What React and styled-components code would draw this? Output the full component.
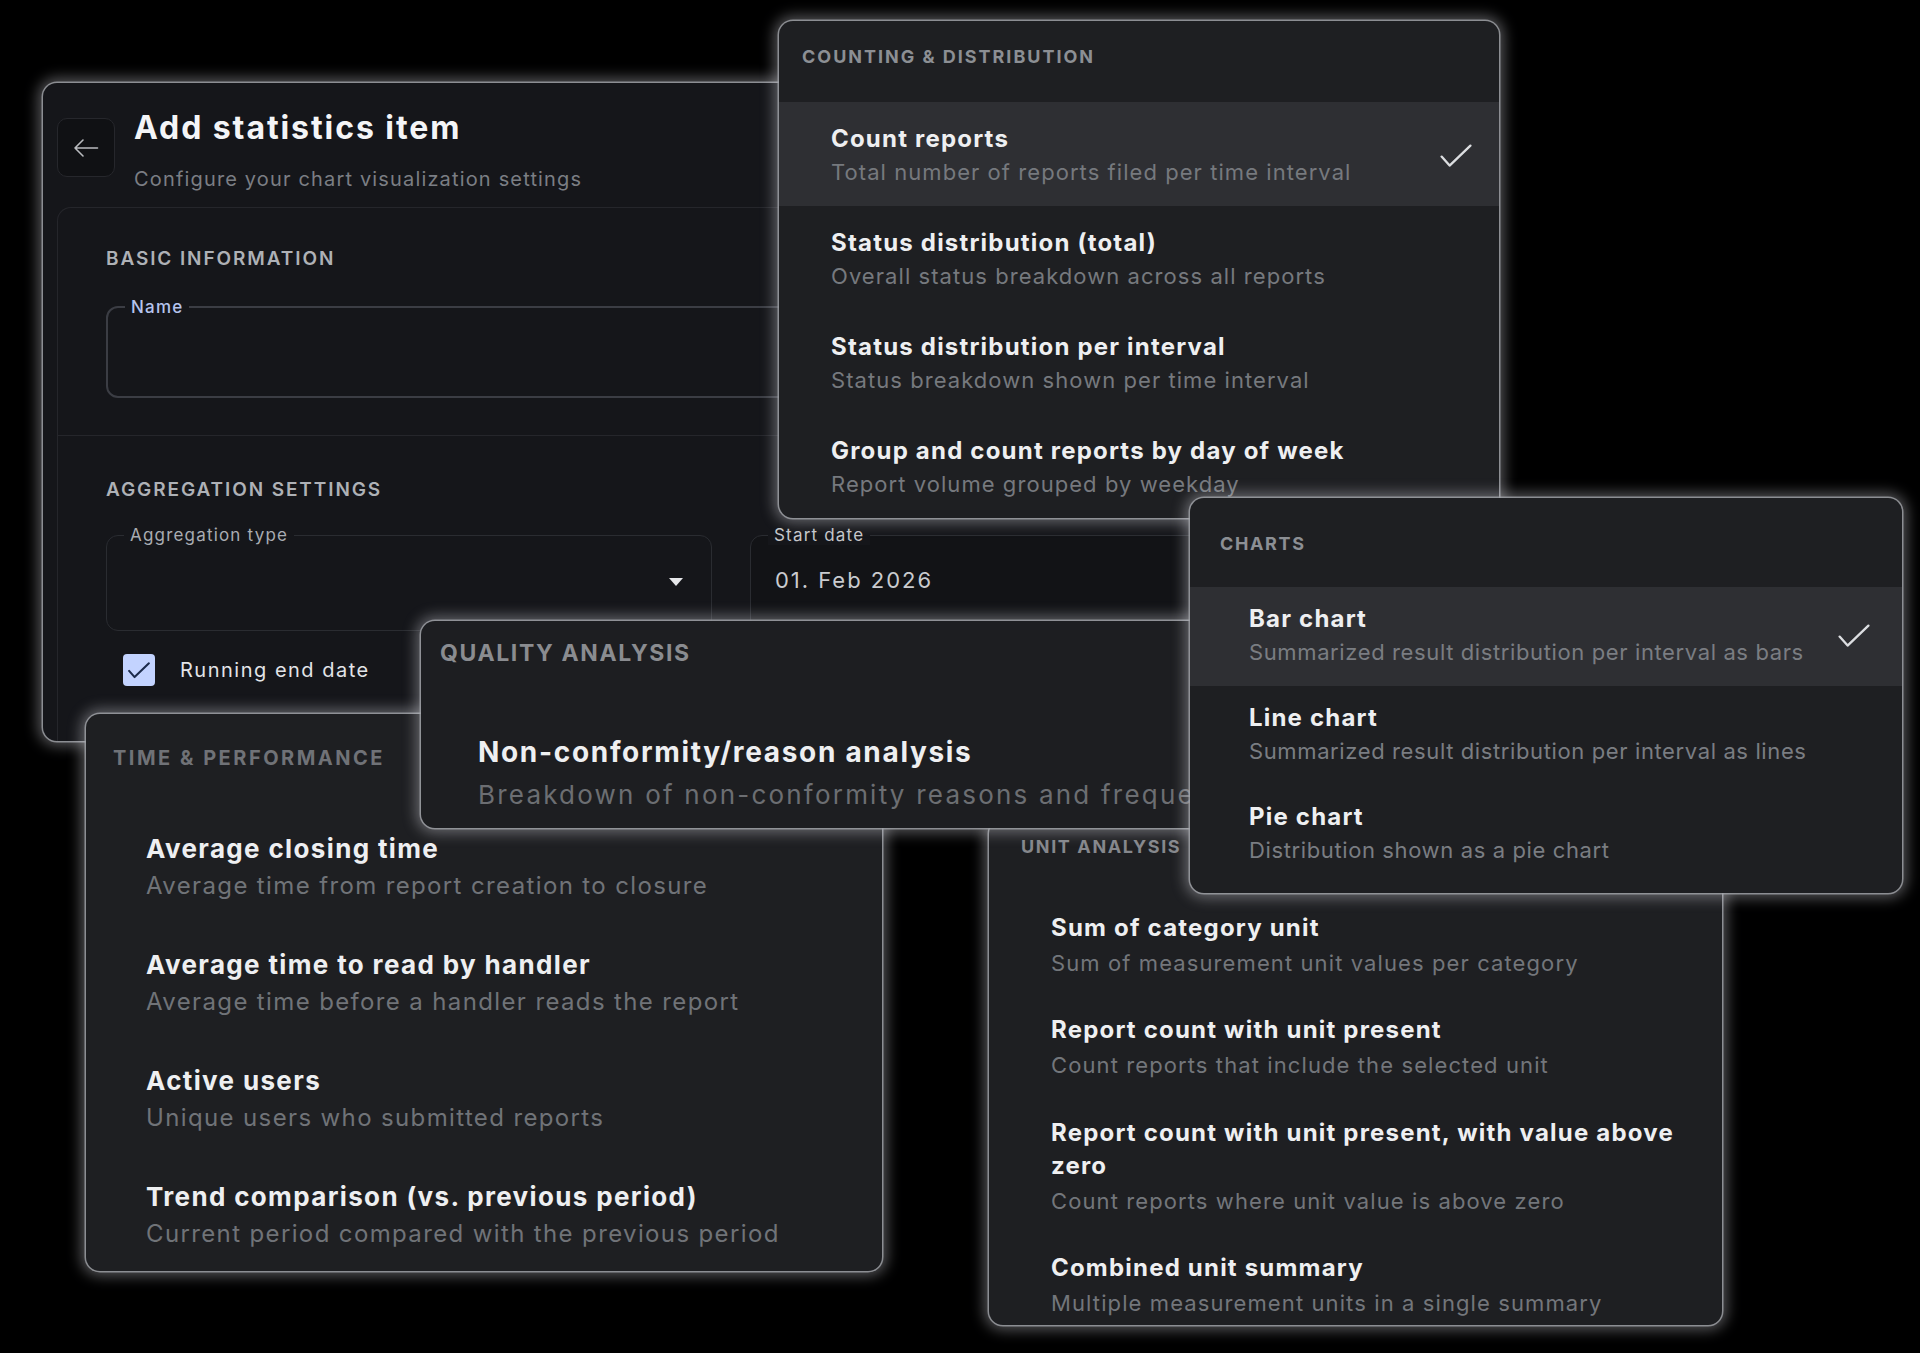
import React from "react";
import styled, { createGlobalStyle } from "styled-components";

const GlobalStyle = createGlobalStyle`
  html, body {
    margin: 0;
    padding: 0;
    background: #000000;
  }
  body {
    font-family: "Inter", "Noto Sans", sans-serif;
    -webkit-font-smoothing: antialiased;
  }
  * {
    box-sizing: border-box;
  }
`;

const Canvas = styled.div`
  position: relative;
  width: 1920px;
  height: 1353px;
  overflow: hidden;
  background: #000000;
`;

/* floating windows on a black canvas: their placement is the content */
const Window = styled.section`
  position: absolute;
  left: ${(p) => p.$x}px;
  top: ${(p) => p.$y}px;
  width: ${(p) => p.$w}px;
  height: ${(p) => p.$h}px;
  z-index: ${(p) => p.$z};
  display: flex;
  flex-direction: column;
  background: ${(p) => p.$bg || "#1e1f22"};
  border-radius: 14px;
  overflow: hidden;
  box-shadow: 0 0 0 1.5px rgba(160, 162, 168, 0.8),
    0 0 14px 5px rgba(220, 222, 228, 0.38);
`;

/* ---------- form window ---------- */

const FormHeader = styled.header`
  display: flex;
  align-items: flex-start;
  gap: 19px;
  padding: 26px 14px 0;
`;

const BackButton = styled.button`
  width: 58px;
  height: 59px;
  margin-top: 9px;
  display: flex;
  align-items: center;
  justify-content: center;
  background: #101114;
  border: 1px solid #26272c;
  border-radius: 10px;
  color: #b9bbbf;
  padding: 0;
`;

const TitleBlock = styled.div`
  display: flex;
  flex-direction: column;
`;

const PageTitle = styled.h1`
  margin: 0;
  font-size: 32px;
  line-height: 38px;
  font-weight: 700;
  letter-spacing: 0.06em;
  color: #f4f5f7;
`;

const PageSubtitle = styled.p`
  margin: 19px 0 0;
  font-size: 20px;
  line-height: 26px;
  letter-spacing: 0.058em;
  color: #7b7e84;
`;

const FormCard = styled.div`
  flex: 1;
  margin: 15px 14px 0;
  border: 1px solid #25262b;
  border-bottom: none;
  border-radius: 14px 14px 0 0;
`;

const FormSection = styled.div`
  padding: ${(p) => (p.$first ? "39px 48px 37px" : "42px 48px 0")};
  border-bottom: ${(p) => (p.$first ? "1px solid #25262b" : "none")};
`;

const SectionLabel = styled.h2`
  margin: 0 0 ${(p) => p.$gap}px;
  font-size: 19px;
  line-height: 24px;
  font-weight: 600;
  letter-spacing: 0.1em;
  color: #aeb1b6;
`;

const FieldGrid = styled.div`
  display: grid;
  grid-template-columns: 1fr 1fr;
  gap: 38px;
`;

const Field = styled.div`
  position: relative;
  height: ${(p) => p.$h}px;
  display: flex;
  align-items: center;
  padding: 0 14px 0 24px;
  border: ${(p) => (p.$active ? "2px solid #3b3d44" : "1px solid #2a2c31")};
  border-radius: 12px;
  background: ${(p) => p.$fill || "transparent"};
`;

const FieldLabel = styled.span`
  position: absolute;
  top: -11px;
  left: 17px;
  padding: 0 6px;
  font-size: 17px;
  line-height: 20px;
  letter-spacing: 0.07em;
  font-weight: ${(p) => (p.$active ? 500 : 400)};
  color: ${(p) => p.$color};
  background: #15161a;
`;

const FieldValue = styled.span`
  flex: 1;
  margin-top: -6px;
  font-size: 22px;
  line-height: 28px;
  letter-spacing: 0.09em;
  color: #c9cbcf;
`;

const Caret = styled.svg`
  margin-left: auto;
  margin-right: 14px;
  margin-top: -2px;
`;

const CheckRow = styled.label`
  display: flex;
  align-items: center;
  gap: 25px;
  margin: 23px 0 0 17px;
`;

const CheckBox = styled.span`
  width: 32px;
  height: 32px;
  display: flex;
  align-items: center;
  justify-content: center;
  background: #c3d3ff;
  border-radius: 4px;
`;

const CheckText = styled.span`
  font-size: 20px;
  line-height: 26px;
  letter-spacing: 0.075em;
  color: #e2e4e8;
`;

/* ---------- option list windows ---------- */

const GroupHeader = styled.div`
  flex: none;
  height: ${(p) => p.$h}px;
  padding: ${(p) => p.$top}px 0 0 ${(p) => p.$left}px;
  margin-bottom: ${(p) => p.$gap || 0}px;
`;

const GroupLabel = styled.span`
  display: block;
  font-size: ${(p) => p.$size}px;
  line-height: ${(p) => p.$lh}px;
  font-weight: ${(p) => p.$weight || 700};
  letter-spacing: ${(p) => p.$ls || 0.1}em;
  color: ${(p) => p.$color || "#8c8f94"};
`;

const OptionRow = styled.div`
  flex: none;
  display: flex;
  align-items: center;
  justify-content: space-between;
  padding: ${(p) => p.$pt}px ${(p) => p.$right}px ${(p) => p.$pb}px
    ${(p) => p.$left}px;
  background: ${(p) => (p.$selected ? "#2e2f33" : "transparent")};
`;

const OptionText = styled.div`
  display: flex;
  flex-direction: column;
  max-width: ${(p) => p.$max || 9999}px;
`;

const OptionTitle = styled.span`
  font-size: ${(p) => p.$size}px;
  line-height: ${(p) => p.$lh}px;
  font-weight: ${(p) => p.$weight || 700};
  letter-spacing: ${(p) => p.$ls}em;
  color: #eeeff1;
`;

const OptionDesc = styled.span`
  margin-top: ${(p) => p.$gap}px;
  font-size: ${(p) => p.$size}px;
  line-height: ${(p) => p.$lh}px;
  letter-spacing: ${(p) => p.$ls}em;
  color: ${(p) => p.$color || "#76797e"};
  white-space: nowrap;
`;

function Tick({ color = "#dcdee1", width = 32, height = 24, stroke = 2.3 }) {
  return (
    <svg width={width} height={height} viewBox="0 0 32 24" fill="none">
      <path
        d="M1.6 12.6 L9.6 21.6 L30.4 1.6"
        stroke={color}
        strokeWidth={stroke}
        strokeLinecap="round"
        strokeLinejoin="round"
      />
    </svg>
  );
}

const counting = [
  ["Count reports", "Total number of reports filed per time interval", true],
  ["Status distribution (total)", "Overall status breakdown across all reports"],
  ["Status distribution per interval", "Status breakdown shown per time interval"],
  ["Group and count reports by day of week", "Report volume grouped by weekday"],
];

const charts = [
  ["Bar chart", "Summarized result distribution per interval as bars", true],
  ["Line chart", "Summarized result distribution per interval as lines"],
  ["Pie chart", "Distribution shown as a pie chart"],
];

const timing = [
  ["Average closing time", "Average time from report creation to closure"],
  ["Average time to read by handler", "Average time before a handler reads the report"],
  ["Active users", "Unique users who submitted reports"],
  ["Trend comparison (vs. previous period)", "Current period compared with the previous period"],
];

const units = [
  ["Sum of category unit", "Sum of measurement unit values per category"],
  ["Report count with unit present", "Count reports that include the selected unit"],
  [
    "Report count with unit present, with value above zero",
    "Count reports where unit value is above zero",
  ],
  ["Combined unit summary", "Multiple measurement units in a single summary"],
];

const quality = [
  [
    "Non-conformity/reason analysis",
    "Breakdown of non-conformity reasons and frequency",
  ],
];

function OptionList({ items, s }) {
  return items.map(([title, desc, selected]) => (
    <OptionRow
      key={title}
      $selected={selected}
      $pt={s.pt}
      $pb={s.pb}
      $left={s.left}
      $right={s.right}
    >
      <OptionText $max={s.max}>
        <OptionTitle $size={s.t} $lh={s.tlh} $ls={s.tls} $weight={s.tw}>
          {title}
        </OptionTitle>
        <OptionDesc
          $size={s.d}
          $lh={s.dlh}
          $ls={s.dls}
          $gap={s.gap}
          $color={s.dc}
        >
          {desc}
        </OptionDesc>
      </OptionText>
      {selected && <Tick />}
    </OptionRow>
  ));
}

const countingStyle = { pt: 22, pb: 19, left: 52, right: 27, t: 24, tlh: 30, tls: 0.05, d: 22, dlh: 30, dls: 0.048, gap: 3 };
const chartStyle = { pt: 17, pb: 19, left: 59, right: 32, t: 24, tlh: 30, tls: 0.05, d: 22, dlh: 30, dls: 0.028, gap: 3, dc: "#7a7d82" };
const timeStyle = { pt: 24, pb: 24, left: 60, right: 30, t: 26, tlh: 32, tls: 0.052, d: 24, dlh: 30, dls: 0.057, gap: 6, dc: "#707378" };
const unitStyle = { pt: 18, pb: 17.5, left: 62, right: 30, t: 24, tlh: 33, tls: 0.05, d: 22, dlh: 30, dls: 0.05, gap: 4, dc: "#73767b", max: 645 };
const qualityStyle = { pt: 0, pb: 0, left: 57, right: 0, t: 28, tlh: 34, tls: 0.06, d: 26, dlh: 32, dls: 0.085, gap: 10, dc: "#6c6e72" };

export default function App() {
  return (
    <>
      <GlobalStyle />
      <Canvas>
        <Window $x={43} $y={83} $w={1376} $h={658} $z={1} $bg="#15161a">
          <FormHeader>
            <BackButton aria-label="Back">
              <svg width="26" height="20" viewBox="0 0 26 20" fill="none">
                <path
                  d="M24.5 10 H2 M10 2 L2 10 L10 18"
                  stroke="currentColor"
                  strokeWidth="1.6"
                  strokeLinecap="round"
                  strokeLinejoin="round"
                />
              </svg>
            </BackButton>
            <TitleBlock>
              <PageTitle>Add statistics item</PageTitle>
              <PageSubtitle>Configure your chart visualization settings</PageSubtitle>
            </TitleBlock>
          </FormHeader>
          <FormCard>
            <FormSection $first>
              <SectionLabel $gap={35}>BASIC INFORMATION</SectionLabel>
              <Field $h={92} $active>
                <FieldLabel $active $color="#b5c4ee">
                  Name
                </FieldLabel>
              </Field>
            </FormSection>
            <FormSection>
              <SectionLabel $gap={33}>AGGREGATION SETTINGS</SectionLabel>
              <FieldGrid>
                <Field $h={96}>
                  <FieldLabel $color="#a9acb2">Aggregation type</FieldLabel>
                  <Caret width="14" height="8" viewBox="0 0 14 8">
                    <polygon points="0,0 14,0 7,8" fill="#e6e7ea" />
                  </Caret>
                </Field>
                <Field $h={96} $fill="#121316">
                  <FieldLabel $color="#c5c7cb">Start date</FieldLabel>
                  <FieldValue>01. Feb 2026</FieldValue>
                </Field>
              </FieldGrid>
              <CheckRow>
                <CheckBox>
                  <Tick color="#1c2b4c" width={22} height={17} stroke={3} />
                </CheckBox>
                <CheckText>Running end date</CheckText>
              </CheckRow>
            </FormSection>
          </FormCard>
        </Window>

        <Window $x={779} $y={21} $w={720} $h={497} $z={2}>
          <GroupHeader $h={81} $top={25} $left={23}>
            <GroupLabel $size={18} $lh={22} $ls={0.11}>
              COUNTING &amp; DISTRIBUTION
            </GroupLabel>
          </GroupHeader>
          <OptionList items={counting} s={countingStyle} />
        </Window>

        <Window $x={86} $y={714} $w={796} $h={557} $z={3}>
          <GroupHeader $h={57} $top={32} $left={27} $gap={37.5}>
            <GroupLabel $size={20} $lh={25} $ls={0.125} $color="#707277">
              TIME &amp; PERFORMANCE
            </GroupLabel>
          </GroupHeader>
          <OptionList items={timing} s={timeStyle} />
        </Window>

        <Window $x={989} $y={820} $w={733} $h={505} $z={4}>
          <GroupHeader $h={37.5} $top={15.5} $left={32} $gap={35}>
            <GroupLabel $size={18} $lh={22} $ls={0.09} $color="#85878c">
              UNIT ANALYSIS
            </GroupLabel>
          </GroupHeader>
          <OptionList items={units} s={unitStyle} />
        </Window>

        <Window $x={421} $y={621} $w={840} $h={207} $z={5} $bg="#1d1e21">
          <GroupHeader $h={46} $top={18} $left={19} $gap={68}>
            <GroupLabel $size={23} $lh={28} $ls={0.07} $color="#8a8c90">
              QUALITY ANALYSIS
            </GroupLabel>
          </GroupHeader>
          <OptionList items={quality} s={qualityStyle} />
        </Window>

        <Window $x={1190} $y={498} $w={712} $h={395} $z={6}>
          <GroupHeader $h={89} $top={35} $left={30}>
            <GroupLabel $size={18} $lh={22} $ls={0.09}>
              CHARTS
            </GroupLabel>
          </GroupHeader>
          <OptionList items={charts} s={chartStyle} />
        </Window>
      </Canvas>
    </>
  );
}
